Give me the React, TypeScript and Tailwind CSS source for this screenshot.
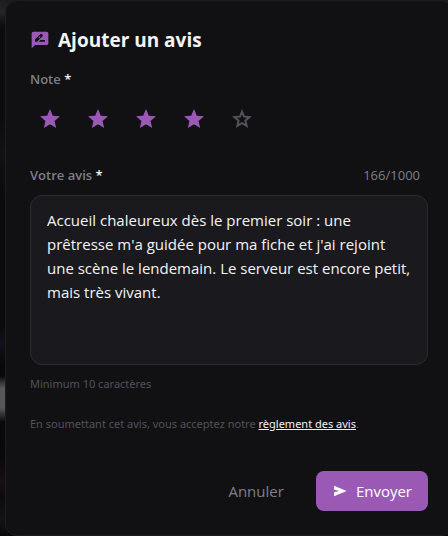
import React, { useState } from 'react'

const MAX_LENGTH = 1000

const INITIAL_REVIEW =
  "Accueil chaleureux dès le premier soir : une prêtresse m'a guidée pour ma fiche et j'ai rejoint une scène le lendemain. Le serveur est encore petit, mais très vivant."

type IconProps = {
  className?: string
}

function ReviewIcon({ className }: IconProps) {
  return (
    <svg viewBox="0 0 24 24" fill="currentColor" fillRule="evenodd" className={className} aria-hidden="true">
      <path d="M2 22V4q0-.825.588-1.412T4 2h16q.825 0 1.413.588T22 4v12q0 .825-.587 1.413T20 18H6zM10.5 14H18v-2h-5.5zM6 14h2.475l6.9-6.9q.2-.2.2-.45t-.2-.45L13.8 4.625q-.2-.2-.45-.2t-.45.2L6 11.525zM11.9 7.4l.9.9-1.9 1.9-.9-.9z" />
    </svg>
  )
}

function StarIcon({ filled, className }: IconProps & { filled: boolean }) {
  return (
    <svg viewBox="0 0 24 24" fill="currentColor" className={className} aria-hidden="true">
      {filled ? (
        <path d="M5.825 21l1.625-7.025L2 9.25l7.2-.625L12 2l2.8 6.625 7.2.625-5.45 4.725L18.175 21 12 17.275z" />
      ) : (
        <path
          fillRule="evenodd"
          d="M8.85 16.825l3.15-1.9 3.15 1.925-.825-3.6 2.775-2.4-3.65-.325-1.45-3.4-1.45 3.375-3.65.325 2.775 2.425zM5.825 21l1.625-7.025L2 9.25l7.2-.625L12 2l2.8 6.625 7.2.625-5.45 4.725L18.175 21 12 17.275z"
        />
      )}
    </svg>
  )
}

function SendIcon({ className }: IconProps) {
  return (
    <svg viewBox="0 0 24 24" fill="currentColor" className={className} aria-hidden="true">
      <path d="M3 20v-6l8-2-8-2V4l19 8z" />
    </svg>
  )
}

export default function App() {
  const [rating, setRating] = useState(4)
  const [review, setReview] = useState(INITIAL_REVIEW)

  return (
    <main className="min-h-screen overflow-hidden pl-[5px] bg-[linear-gradient(to_bottom,#1c1b1d_0,#252427_12px,#0d0b0f_26px,#0d0b0f_120px,#131116_150px,#0a090b_200px,#0b090e_325px,#150f1d_343px,#08060a_365px,#09070b_376px,#575757_388px,#575757_408px,#09070b_422px,#0a080d_460px,#170e18_482px,#0c0a0f_496px,#131215_520px,#09080a_536px)] font-['Open_Sans','Noto_Sans',sans-serif]">
      <form
        onSubmit={(e) => e.preventDefault()}
        className="-mr-[5px] rounded-xl border border-[#1e1e20] bg-[#111113] p-6"
      >
        <h2 className="flex items-center gap-2 text-[19px] leading-[30px] font-bold text-[#f4f4f5]">
          <ReviewIcon className="w-5 h-5 text-[#9b59b6]" />
          Ajouter un avis
        </h2>

        <fieldset className="mt-3.5">
          <legend className="text-[13px] leading-5 font-semibold text-[#7f7f88]">
            Note <span className="text-[#f4f4f5]">*</span>
          </legend>
          <div className="mt-2.5 flex gap-2">
            {[1, 2, 3, 4, 5].map((value) => (
              <button
                key={value}
                type="button"
                onClick={() => setRating(value)}
                aria-label={`${value} sur 5`}
                aria-pressed={value === rating}
                className="w-10 h-10 flex items-center justify-center rounded-lg"
              >
                <StarIcon
                  filled={value <= rating}
                  className={value <= rating ? 'w-6 h-6 text-[#9b59b6]' : 'w-6 h-6 text-[#52525b]'}
                />
              </button>
            ))}
          </div>
        </fieldset>

        <div className="mt-[26px] flex items-center justify-between text-[13px] leading-5 text-[#7f7f88]">
          <label htmlFor="review" className="font-semibold">
            Votre avis <span className="text-[#f4f4f5]">*</span>
          </label>
          <span className="mr-2">
            {review.length}/{MAX_LENGTH}
          </span>
        </div>
        <textarea
          id="review"
          value={review}
          onChange={(e) => setReview(e.target.value)}
          maxLength={MAX_LENGTH}
          rows={6}
          spellCheck={false}
          className="mt-2.5 block w-full resize-none rounded-xl border border-[#2b2b2e] bg-[#1a1a1e] px-4 py-3 text-[15px] leading-6 text-[#f4f4f5] outline-none"
        />
        <p className="mt-2.5 font-['Noto_Sans',sans-serif] text-[11px] leading-[18px] text-[#52525b]">
          Minimum 10 caractères
        </p>

        <p className="mt-[22px] font-['Noto_Sans',sans-serif] text-[11px] leading-[18px] text-[#52525b]">
          En soumettant cet avis, vous acceptez notre{' '}
          <a href="#reglement" className="text-[#f4f4f5] underline">
            règlement des avis
          </a>
          .
        </p>

        <div className="mt-[38px] flex justify-end gap-4">
          <button type="button" className="h-10 px-4 text-[15px] text-[#7f7f88]">
            Annuler
          </button>
          <button
            type="submit"
            className="h-10 px-4 flex items-center gap-2 rounded-lg bg-[#9b59b6] text-[15px] text-white"
          >
            <SendIcon className="w-4 h-4" />
            Envoyer
          </button>
        </div>
      </form>
    </main>
  )
}
